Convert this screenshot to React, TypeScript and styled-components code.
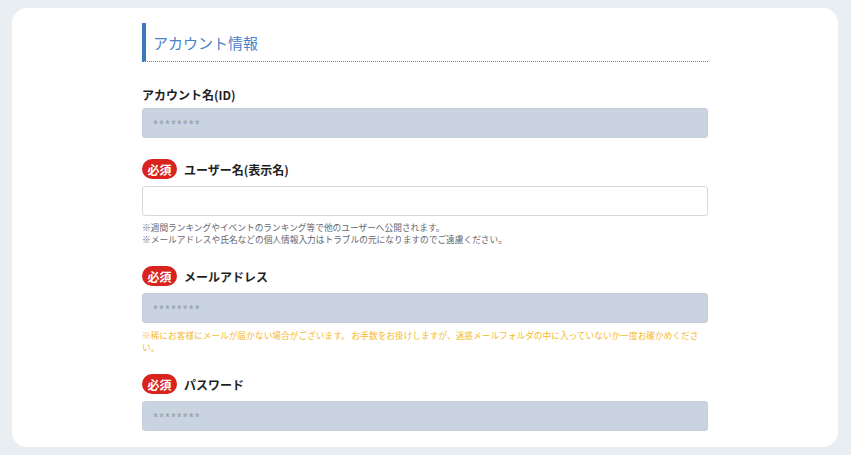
import styled, {createGlobalStyle} from 'styled-components';

const GlobalStyle = createGlobalStyle`
  html, body {
    margin: 0;
    padding: 0;
    background: #e9eef2;
    font-family: "Noto Sans CJK JP", "Noto Sans", sans-serif;
  }
`;

type FieldProps = {
  label: string;
  required?: boolean;
  filled?: boolean;
  notes?: string[];
  warning?: string;
  top: number;
};

function Field({label, required, filled, notes, warning, top}: FieldProps) {
  return (
    <FieldBlock $top={top}>
      <LabelRow $required={required}>
        {required && <Badge>必須</Badge>}
        <Label>{label}</Label>
      </LabelRow>
      <Input
        $filled={filled}
        placeholder={filled ? '********' : ''}
        readOnly={filled}
      />
      {notes && (
        <Note>
          {notes.map((n) => (
            <div key={n}>{n}</div>
          ))}
        </Note>
      )}
      {warning && <Warning>{warning}</Warning>}
    </FieldBlock>
  );
}

export default function App() {
  return (
    <>
      <GlobalStyle />
      <Page>
        <Card>
          <Content>
            <Heading>アカウント情報</Heading>
            <Field label="アカウント名(ID)" filled top={22} />
            <Field
              label="ユーザー名(表示名)"
              required
              top={21}
              notes={[
                '※週間ランキングやイベントのランキング等で他のユーザーへ公開されます。',
                '※メールアドレスや氏名などの個人情報入力はトラブルの元になりますのでご遠慮ください。',
              ]}
            />
            <Field
              label="メールアドレス"
              required
              filled
              top={20}
              warning="※稀にお客様にメールが届かない場合がございます。 お手数をお掛けしますが、迷惑メールフォルダの中に入っていないか一度お確かめください。"
            />
            <Field label="パスワード" required filled top={20} />
          </Content>
        </Card>
      </Page>
    </>
  );
}

const Page = styled.div`
  padding: 8px 13px 9px 12px;
`;

const Card = styled.div`
  background: #ffffff;
  border-radius: 15px;
  padding: 15px 0 16px;
`;

const Content = styled.div`
  width: 566px;
  margin: 0 auto;
`;

const Heading = styled.h2`
  margin: 0;
  height: 38px;
  display: flex;
  align-items: center;
  padding-left: 7px;
  border-left: 4px solid #3a78c2;
  border-bottom: 1px dotted #5b7fb8;
  color: #4a82c9;
  font-size: 15px;
  font-weight: normal;
`;

const FieldBlock = styled.div<{$top: number}>`
  margin-top: ${(p) => p.$top}px;
`;

const LabelRow = styled.div<{$required?: boolean}>`
  display: flex;
  align-items: center;
  gap: 7px;
  height: 20px;
  margin-bottom: ${(p) => (p.$required ? 7 : 4)}px;
`;

const Badge = styled.span`
  display: inline-flex;
  align-items: center;
  justify-content: center;
  width: 35px;
  height: 20px;
  border-radius: 10px;
  background: #d8231e;
  color: #ffffff;
  font-size: 12px;
  font-weight: bold;
`;

const Label = styled.span`
  font-size: 12px;
  font-weight: bold;
  color: #1f1f1f;
`;

const Input = styled.input<{$filled?: boolean}>`
  display: block;
  box-sizing: border-box;
  width: 100%;
  height: 30px;
  margin: 0;
  padding: 0 10px;
  border-radius: 3px;
  border: 1px solid ${(p) => (p.$filled ? '#c4cedb' : '#d3d9e1')};
  background: ${(p) => (p.$filled ? '#cad4e0' : '#ffffff')};
  font-family: "Noto Sans", sans-serif;
  font-size: 9px;
  outline: none;
  &::placeholder {
    color: #8d99ab;
    letter-spacing: 1px;
  }
`;

const Note = styled.div`
  margin-top: 6px;
  font-size: 8.7px;
  line-height: 12px;
  color: #5f6672;
`;

const Warning = styled.div`
  margin-top: 7px;
  font-size: 8.7px;
  line-height: 12px;
  color: #f5b932;
`;
